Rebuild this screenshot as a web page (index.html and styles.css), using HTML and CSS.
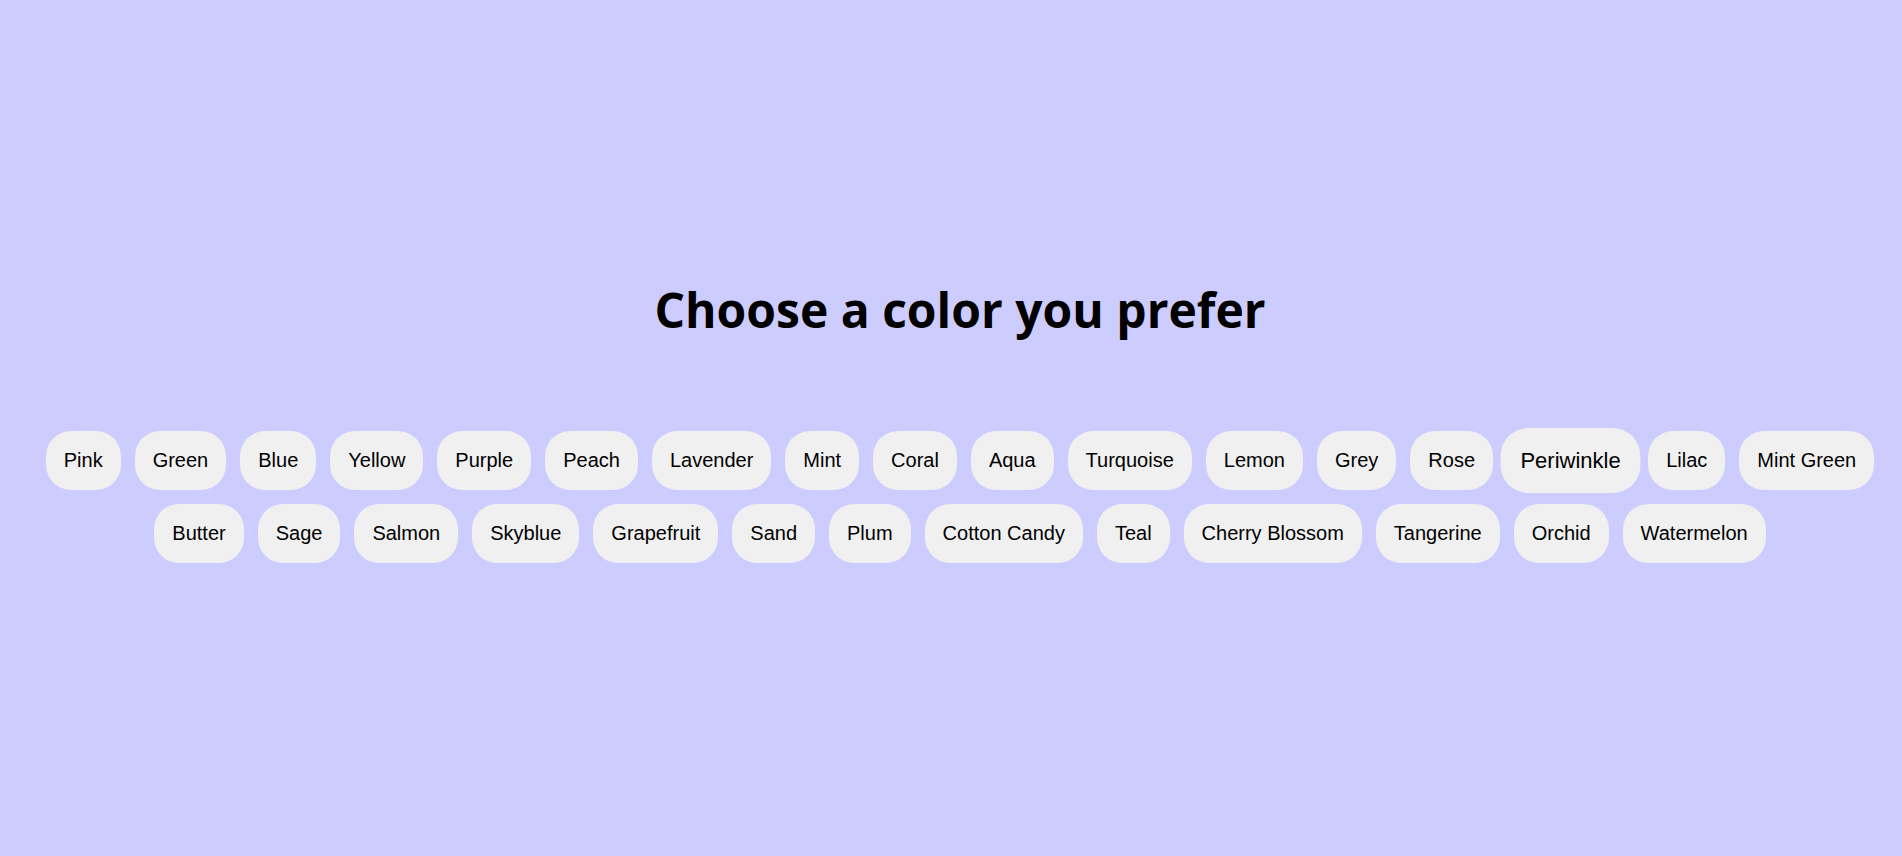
FILE: index.html
```html
<!DOCTYPE html>
<html lang="en">
<head>
<meta charset="utf-8">
<title>Choose a color</title>
<link rel="stylesheet" href="styles.css">
</head>
<body>
<main class="page">
  <h1 class="title">Choose a color you prefer</h1>
  <div class="choices">
    <button class="choice">Pink</button>
    <button class="choice">Green</button>
    <button class="choice">Blue</button>
    <button class="choice">Yellow</button>
    <button class="choice">Purple</button>
    <button class="choice">Peach</button>
    <button class="choice">Lavender</button>
    <button class="choice">Mint</button>
    <button class="choice">Coral</button>
    <button class="choice">Aqua</button>
    <button class="choice">Turquoise</button>
    <button class="choice">Lemon</button>
    <button class="choice">Grey</button>
    <button class="choice">Rose</button>
    <button class="choice choice--hover">Periwinkle</button>
    <button class="choice">Lilac</button>
    <button class="choice">Mint Green</button>
    <button class="choice">Butter</button>
    <button class="choice">Sage</button>
    <button class="choice">Salmon</button>
    <button class="choice">Skyblue</button>
    <button class="choice">Grapefruit</button>
    <button class="choice">Sand</button>
    <button class="choice">Plum</button>
    <button class="choice">Cotton Candy</button>
    <button class="choice">Teal</button>
    <button class="choice">Cherry Blossom</button>
    <button class="choice">Tangerine</button>
    <button class="choice">Orchid</button>
    <button class="choice">Watermelon</button>
  </div>
</main>
</body>
</html>
```
FILE: styles.css
```css
html, body {
  margin: 0;
  padding: 0;
  background: #ccccff;
  overflow: hidden;
}

.page {
  box-sizing: border-box;
  min-height: 100vh;
  padding-left: 18px;
  padding-bottom: 8px;
  display: flex;
  flex-direction: column;
  align-items: center;
  justify-content: center;
}

.title {
  margin: 0 0 82px;
  font-family: "Open Sans", "Noto Sans", sans-serif;
  font-weight: 700;
  font-size: 48px;
  line-height: 64px;
  color: #000;
}

.choices {
  display: flex;
  flex-wrap: wrap;
  justify-content: center;
}

.choice {
  margin: 7px;
  padding: 18px;
  border: none;
  border-radius: 25px;
  background: #f0f0f0;
  color: #000;
  font-family: "Liberation Sans", Arial, sans-serif;
  font-size: 20px;
  line-height: 23px;
  cursor: pointer;
}

.choice--hover {
  transform: scale(1.1);
}
```
